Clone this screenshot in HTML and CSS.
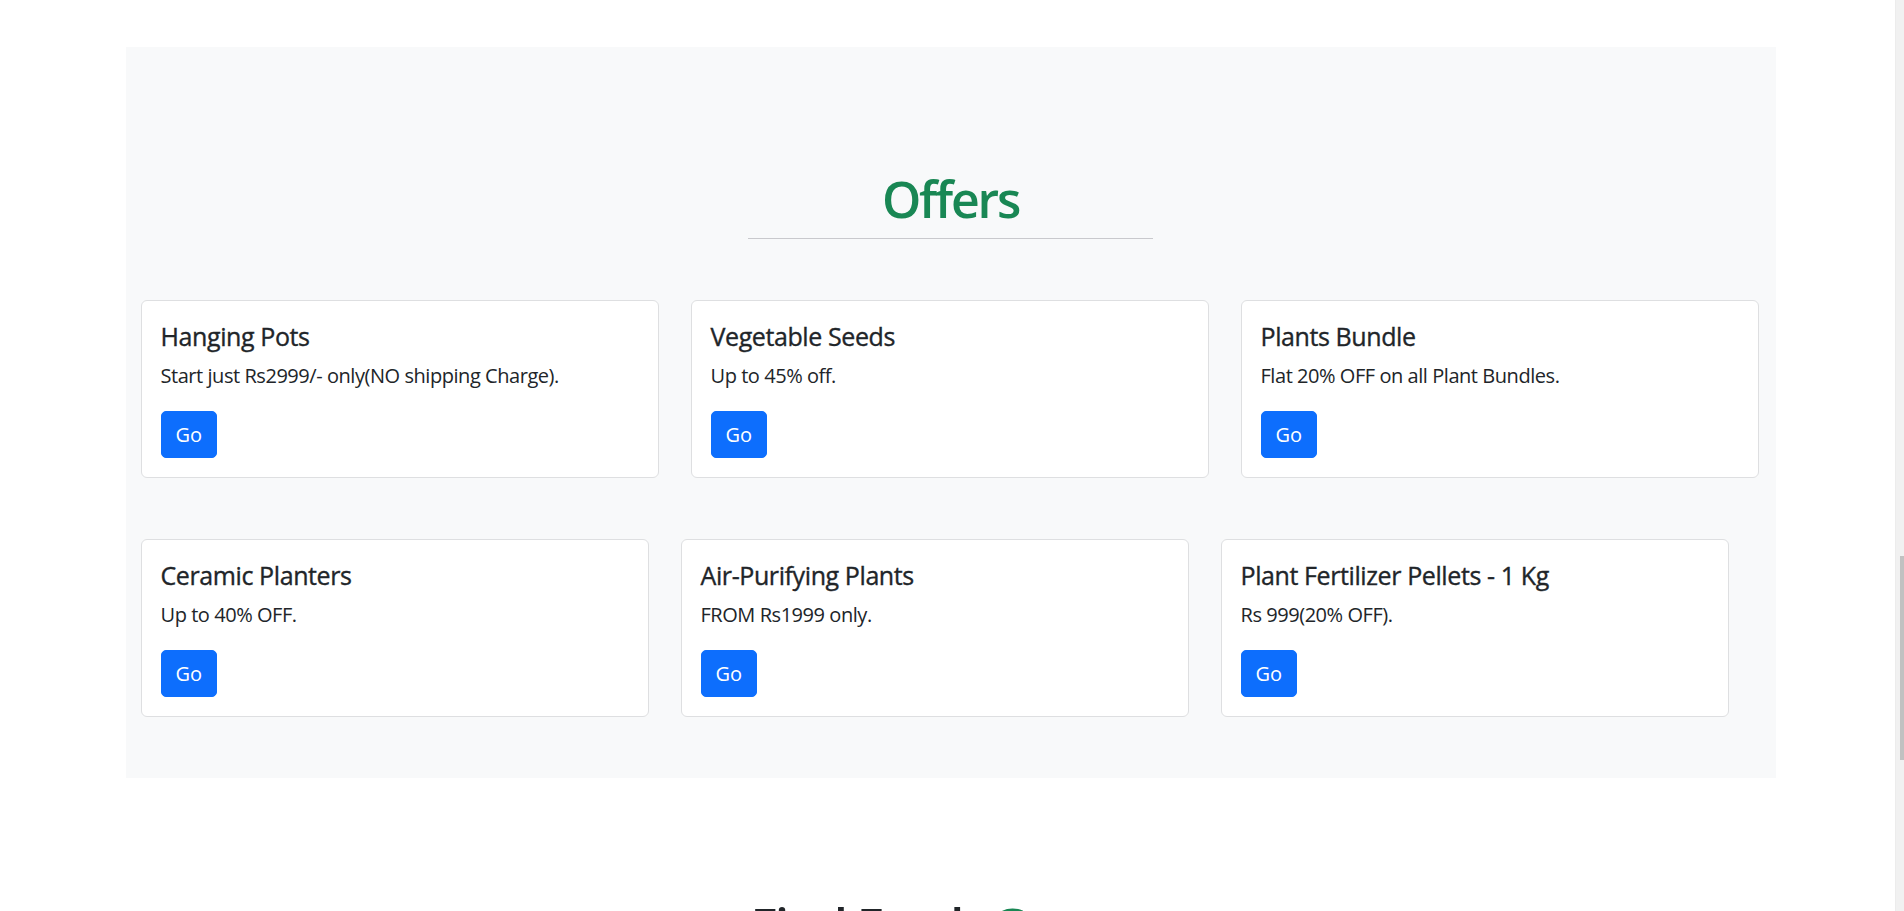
FILE: index.html
```html
<!DOCTYPE html>
<html lang="en">
<head>
<meta charset="utf-8">
<title>Offers</title>
<link rel="stylesheet" href="styles.css">
</head>
<body>
<div class="page">
  <section class="offers">
    <div class="offers-head">
      <h2 class="offers-title">Offers</h2>
      <hr class="offers-rule">
    </div>
    <div class="card-row row-a">
      <div class="card">
        <h5 class="card-title">Hanging Pots</h5>
        <p class="card-text">Start just Rs2999/- only(NO shipping Charge).</p>
        <a class="btn" href="#">Go</a>
      </div>
      <div class="card">
        <h5 class="card-title">Vegetable Seeds</h5>
        <p class="card-text">Up to 45% off.</p>
        <a class="btn" href="#">Go</a>
      </div>
      <div class="card">
        <h5 class="card-title">Plants Bundle</h5>
        <p class="card-text">Flat 20% OFF on all Plant Bundles.</p>
        <a class="btn" href="#">Go</a>
      </div>
    </div>
    <div class="card-row row-b">
      <div class="card">
        <h5 class="card-title">Ceramic Planters</h5>
        <p class="card-text">Up to 40% OFF.</p>
        <a class="btn" href="#">Go</a>
      </div>
      <div class="card">
        <h5 class="card-title">Air-Purifying Plants</h5>
        <p class="card-text">FROM Rs1999 only.</p>
        <a class="btn" href="#">Go</a>
      </div>
      <div class="card">
        <h5 class="card-title">Plant Fertilizer Pellets - 1 Kg</h5>
        <p class="card-text">Rs 999(20% OFF).</p>
        <a class="btn" href="#">Go</a>
      </div>
    </div>
  </section>
  <section class="next">
    <h2 class="next-title">Find Fresh <span class="green">Greens</span></h2>
  </section>
</div>
<div class="scrollbar"><div class="thumb"></div></div>
</body>
</html>
```
FILE: styles.css
```css
html, body {
  margin: 0;
  padding: 0;
  background: #ffffff;
  height: 100%;
  overflow: hidden;
}
body {
  font-family: "Open Sans", "Noto Sans", sans-serif;
  color: #212529;
  font-size: 20px;
  line-height: 1.5;
}
.page {
  width: calc(100% - 3px);
  padding-top: 47px;
}
.offers {
  width: 1650px;
  margin: 0 auto;
  background: #f8f9fa;
  padding: 122px 15px 61px;
  box-sizing: border-box;
}
.offers-head {
  display: flex;
  flex-direction: column;
  align-items: center;
}
.offers-title {
  margin: 0;
  font-size: 50px;
  line-height: 60px;
  font-weight: 600;
  color: #198754;
  letter-spacing: -2.2px;
}
.offers-rule {
  width: 405px;
  margin: 9px 0 0;
  border: 0;
  border-top: 1px solid #c9c9cd;
  height: 0;
}
.card-row {
  display: flex;
  gap: 32px;
}
.row-a {
  margin-top: 61px;
}
.row-b {
  margin-top: 61px;
}
.row-a .card { width: 518px; }
.row-b .card { width: 508px; }
.card {
  box-sizing: border-box;
  background: #ffffff;
  border: 1px solid #dedfe1;
  border-radius: 6px;
  padding: 20px 20px 19px 19px;
}
.card-title {
  margin: 0 0 10px;
  font-size: 25px;
  line-height: 30px;
  font-weight: 500;
  color: #212529;
  letter-spacing: -0.4px;
  -webkit-text-stroke: 0.35px #212529;
}
.card-text {
  margin: 0 0 20px;
  font-size: 20px;
  line-height: 30px;
  letter-spacing: -0.45px;
}
.btn {
  display: inline-block;
  background: #0d6efd;
  color: #ffffff;
  text-decoration: none;
  font-size: 20px;
  line-height: 30px;
  padding: 7.5px 14px;
  border: 1px solid #0d6efd;
  border-radius: 5px;
}
.next {
  padding-top: 118px;
  text-align: center;
}
.next-title {
  margin: 0;
  font-size: 50px;
  line-height: 60px;
  font-weight: 600;
  color: #212529;
  letter-spacing: -2px;
}
.green {
  color: #198754;
}
.scrollbar {
  position: fixed;
  top: 0;
  right: 0;
  width: 8px;
  height: 100%;
  background: #f1f1f1;
  border-left: 1px solid #ececec;
}
.thumb {
  position: absolute;
  right: 0;
  top: 556px;
  width: 4px;
  height: 204px;
  background: #c1c1c1;
}
```
